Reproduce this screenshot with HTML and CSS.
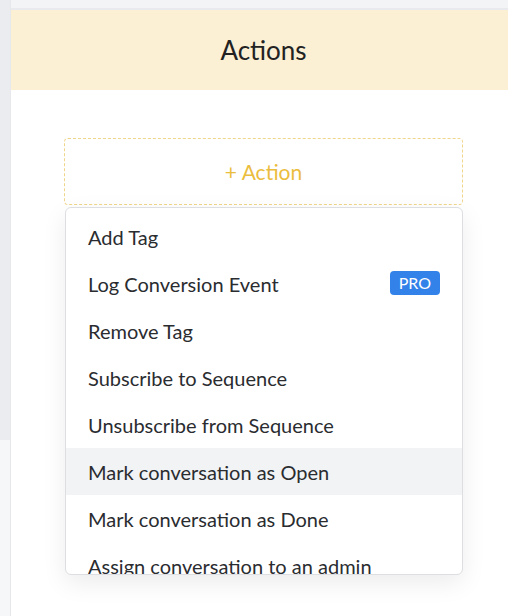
FILE: index.html
```html
<!DOCTYPE html>
<html lang="en">
<head>
    <meta charset="UTF-8">
    <meta name="viewport" content="width=device-width, initial-scale=1.0">
    <title>Actions</title>
    <link rel="stylesheet" href="styles.css">
</head>
<body>
    <div class="page">
        <div class="sidebar">
            <div class="sidebar-top"></div>
        </div>
        <div class="main">
            <div class="topbar"></div>
            <div class="panel-header">Actions</div>
            <div class="panel-body">
                <div class="add-action">+ Action</div>
                <div class="menu">
                    <div class="menu-item">Add Tag</div>
                    <div class="menu-item">Log Conversion Event <span class="badge">PRO</span></div>
                    <div class="menu-item">Remove Tag</div>
                    <div class="menu-item">Subscribe to Sequence</div>
                    <div class="menu-item">Unsubscribe from Sequence</div>
                    <div class="menu-item active">Mark conversation as Open</div>
                    <div class="menu-item">Mark conversation as Done</div>
                    <div class="menu-item">Assign conversation to an admin</div>
                </div>
            </div>
        </div>
    </div>
</body>
</html>
```

FILE: styles.css
```css
body {
    margin: 0;
    font-family: Lato, "Open Sans", sans-serif;
    background: #fff;
    overflow: hidden;
}
.page {
    display: flex;
    height: 616px;
}
.sidebar {
    width: 10px;
    background: #f6f7f8;
    border-right: 1px solid #e6e8eb;
    flex-shrink: 0;
}
.sidebar-top {
    height: 440px;
    background: #eaecef;
}
.main {
    flex: 1;
    display: flex;
    flex-direction: column;
    min-width: 0;
}
.topbar {
    height: 8px;
    background: #f3f4f6;
    border-bottom: 2px solid #e9eaed;
}
.panel-header {
    height: 80px;
    background: #fbefd4;
    color: #222;
    font-size: 26px;
    display: flex;
    align-items: center;
    justify-content: center;
    padding-left: 8px;
}
.panel-body {
    flex: 1;
    padding: 48px 0 0 53px;
}
.add-action {
    width: 397px;
    height: 65px;
    border: 1.5px dashed #f0d68a;
    border-radius: 4px;
    color: #ebbd3e;
    font-size: 21px;
    display: flex;
    align-items: center;
    justify-content: center;
}
.menu {
    width: 396px;
    height: 361px;
    margin-top: 2px;
    margin-left: 1px;
    background: #fff;
    border: 1px solid #dcdee1;
    border-radius: 6px;
    box-shadow: 0 8px 24px rgba(0, 0, 0, 0.08);
    padding-top: 5px;
    overflow: hidden;
}
.menu-item {
    height: 47px;
    padding: 0 22px;
    display: flex;
    align-items: center;
    justify-content: space-between;
    font-size: 20px;
    color: #2a2c30;
}
.menu-item.active {
    background: #f2f3f5;
}
.badge {
    background: #3282ea;
    color: #fff;
    font-size: 16px;
    line-height: 20px;
    padding: 2px 9px;
    border-radius: 4px;
    margin-right: 0;
    margin-bottom: 2px;
}
```
